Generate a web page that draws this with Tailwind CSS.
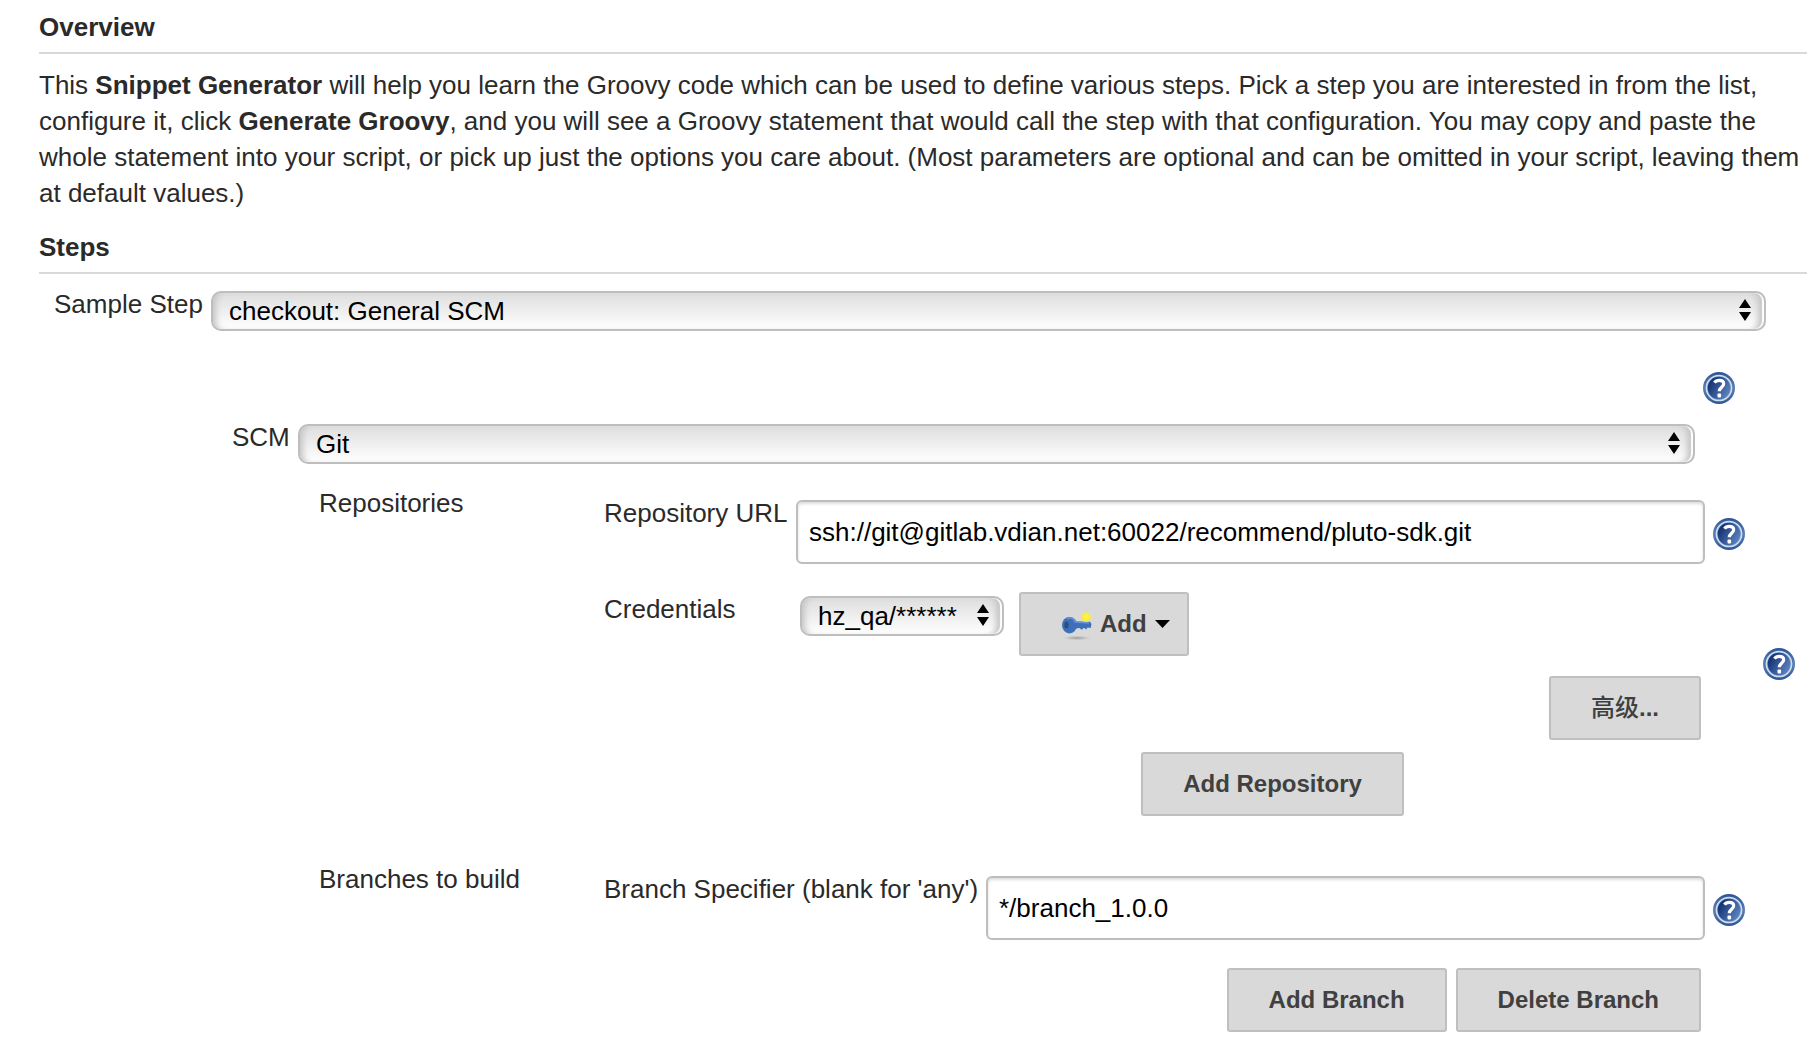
<!DOCTYPE html>
<html lang="en">
<head>
<meta charset="utf-8">
<title>Snippet Generator</title>
<script src="https://cdn.jsdelivr.net/npm/@tailwindcss/browser@4"></script>
</head>
<body class="bg-white font-['Liberation_Sans','Noto_Sans_CJK_SC',sans-serif] text-[26px] leading-9 text-[#2a2a2a]">
<svg class="absolute size-0" aria-hidden="true">
  <defs>
    <linearGradient id="disc" x1="0" y1="0.2" x2="1" y2="0.8">
      <stop offset="0.1" stop-color="#143374"/><stop offset="1" stop-color="#6189c4"/>
    </linearGradient>
    <linearGradient id="rim" x1="0" y1="0" x2="0" y2="1">
      <stop offset="0" stop-color="#2c5595"/><stop offset="0.5" stop-color="#5b80b8"/><stop offset="1" stop-color="#2c5595"/>
    </linearGradient>
  </defs>
  <symbol id="help" viewBox="0 0 32 32">
    <circle cx="16" cy="16" r="16" fill="url(#rim)"/>
    <circle cx="16" cy="16" r="12.600" fill="#7f9ecd" stroke="#d3deef" stroke-width="1.500"/>
    <circle cx="16" cy="16" r="11.3" fill="url(#disc)"/>
    <path d="M11.4 10.6c1.2-1.7 2.8-2.3 4.8-2.3 2.8 0 4.5 1.3 4.5 3.5 0 3.4-4.4 3.5-4.4 7.4" fill="none" stroke="#fff" stroke-width="3.2"/>
    <rect x="14.5" y="21.6" width="3.6" height="3.8" rx="0.8" fill="#fff"/>
  </symbol>
  <symbol id="updown" viewBox="0 0 12 22">
    <path d="M6 0l6 9H0zM6 22l6-9H0z" fill="#000"/>
  </symbol>
</svg>

<main class="pt-[9px] pr-[3px] pb-3 pl-[39px]">
  <h1 class="border-b-2 border-[#d9d9d9] pb-[7px] font-bold">Overview</h1>
  <p class="mt-[13px]">This <b>Snippet Generator</b> will help you learn the Groovy code which can be used to define various steps. Pick a step you are interested in from the list, configure it, click <b>Generate Groovy</b>, and you will see a Groovy statement that would call the step with that configuration. You may copy and paste the whole statement into your script, or pick up just the options you care about. (Most parameters are optional and can be omitted in your script, leaving them at default values.)</p>

  <h2 class="mt-[18px] border-b-2 border-[#d9d9d9] pb-[7px] font-bold">Steps</h2>

  <form>
    <div class="flex items-start pt-3 pr-[41px] pl-[15px]">
      <label for="step" class="w-[157px] shrink-0">Sample Step</label>
      <div class="relative mt-[5px] flex-1">
        <select id="step" class="block h-10 w-full appearance-none rounded-[10px] border-2 border-[#bebebe] bg-linear-to-b from-[#dedede] to-white pr-10 pb-1 pl-4 text-black shadow-[inset_-2px_0_1px_#fff,inset_7px_0_6px_-4px_#c4c4c4,inset_-10px_0_6px_-4px_#c4c4c4]"><option>checkout: General SCM</option></select>
        <svg class="pointer-events-none absolute top-2 right-[15px] h-[22px] w-3" aria-hidden="true"><use href="#updown"/></svg>
      </div>
    </div>

    <div class="mt-[41px] flex justify-end pr-[72px]">
      <a href="#" aria-label="Help for SCM"><svg class="size-8"><use href="#help"/></svg></a>
    </div>

    <div class="mt-[15px] flex items-start pr-28 pl-[193px]">
      <label for="scm" class="w-[66px] shrink-0">SCM</label>
      <div class="relative mt-[5px] flex-1">
        <select id="scm" class="block h-10 w-full appearance-none rounded-[10px] border-2 border-[#bebebe] bg-linear-to-b from-[#dedede] to-white pr-10 pb-1 pl-4 text-black shadow-[inset_-2px_0_1px_#fff,inset_7px_0_6px_-4px_#c4c4c4,inset_-10px_0_6px_-4px_#c4c4c4]"><option>Git</option></select>
        <svg class="pointer-events-none absolute top-2 right-[15px] h-[22px] w-3" aria-hidden="true"><use href="#updown"/></svg>
      </div>
    </div>

    <section class="mt-[21px] grid grid-cols-[285px_1fr_32px] pr-3 pl-[280px]">
      <h3>Repositories</h3>
      <div class="pt-[10px] pr-[18px] pb-[27px]">
        <div class="flex items-start">
          <label for="url" class="w-48 shrink-0">Repository URL</label>
          <input id="url" type="text" value="ssh://git@gitlab.vdian.net:60022/recommend/pluto-sdk.git" class="mt-[5px] h-16 min-w-0 flex-1 rounded-md border-2 border-[#bebebe] bg-white px-[11px] text-black shadow-[inset_0_2px_3px_#ddd]">
          <a href="#" class="mt-[23px] ml-2" aria-label="Help for Repository URL"><svg class="size-8"><use href="#help"/></svg></a>
        </div>
        <div class="mt-[27px] flex items-start">
          <label for="cred" class="w-[196px] shrink-0">Credentials</label>
          <div class="relative mt-[5px] w-[204px]">
            <select id="cred" class="block h-10 w-full appearance-none rounded-[10px] border-2 border-[#bebebe] bg-linear-to-b from-[#dedede] to-white pr-8 pb-1 pl-4 text-black shadow-[inset_-2px_0_1px_#fff,inset_7px_0_6px_-4px_#c4c4c4,inset_-10px_0_6px_-4px_#c4c4c4]"><option>hz_qa/******</option></select>
            <svg class="pointer-events-none absolute top-2 right-[15px] h-[22px] w-3" aria-hidden="true"><use href="#updown"/></svg>
          </div>
          <button type="button" class="mt-px ml-[15px] flex h-16 w-[170px] items-center rounded-[3px] border-2 border-[#bfbfbf] bg-[#d9d9d9] pl-10 text-2xl font-bold text-[#404040]">
            <svg class="size-8" viewBox="0 0 32 32" aria-hidden="true">
              <defs>
                <radialGradient id="shade"><stop offset="0" stop-color="#888" stop-opacity="0.8"/><stop offset="1" stop-color="#aaa" stop-opacity="0"/></radialGradient>
                <radialGradient id="spark"><stop offset="0.2" stop-color="#fff34a"/><stop offset="0.7" stop-color="#f6e947"/><stop offset="1" stop-color="#eee87c" stop-opacity="0"/></radialGradient>
              </defs>
              <ellipse cx="16" cy="30" rx="14" ry="2.4" fill="url(#shade)"/>
              <path d="M13 13.5l16 .3 1.5 2.2-.8 4-3-.6-1.6 2-2-1.7-2.4 2-2.2-1.6-5.5.6z" fill="#3d70b8"/>
              <ellipse cx="8.5" cy="17.2" rx="7.5" ry="8.3" fill="#3d70b8"/>
              <path d="M6 11q6-3 8 3l14 1" fill="none" stroke="#6793d1" stroke-width="1.5"/>
              <ellipse cx="5.5" cy="17" rx="2.2" ry="3.6" fill="#2e4f80"/>
              <circle cx="25" cy="9" r="5.8" fill="url(#spark)"/>
            </svg>
            <span class="ml-[7px]">Add</span>
            <svg class="ml-2 h-2 w-[15px]" viewBox="0 0 15 8" aria-hidden="true"><path d="M0 0h15L7.500 8z" fill="#000"/></svg>
          </button>
        </div>
        <div class="mt-5 flex justify-end pr-11">
          <button type="button" class="h-16 rounded-[3px] border-2 border-[#bfbfbf] bg-[#d9d9d9] px-10 text-2xl font-bold text-[#404040]"><span class="font-medium">高级</span>...</button>
        </div>
        <div class="mt-3 flex justify-center pl-[196px]">
          <button type="button" class="h-16 rounded-[3px] border-2 border-[#bfbfbf] bg-[#d9d9d9] px-10 text-2xl font-bold text-[#404040]">Add Repository</button>
        </div>
      </div>
      <a href="#" class="self-center" aria-label="Help for Repositories"><svg class="size-8"><use href="#help"/></svg></a>
    </section>

    <section class="mt-[18px] grid grid-cols-[285px_1fr_32px] pr-3 pl-[280px]">
      <h3>Branches to build</h3>
      <div class="pt-[10px] pr-[18px]">
        <div class="flex items-start">
          <label for="branch" class="w-[382px] shrink-0">Branch Specifier (blank for 'any')</label>
          <input id="branch" type="text" value="*/branch_1.0.0" class="mt-[5px] h-16 min-w-0 flex-1 rounded-md border-2 border-[#bebebe] bg-white px-[11px] text-black shadow-[inset_0_2px_3px_#ddd]">
          <a href="#" class="mt-[23px] ml-2" aria-label="Help for Branch Specifier"><svg class="size-8"><use href="#help"/></svg></a>
        </div>
        <div class="mt-7 flex justify-end gap-[9px] pr-11">
          <button type="button" class="h-16 rounded-[3px] border-2 border-[#bfbfbf] bg-[#d9d9d9] px-10 text-2xl font-bold text-[#404040]">Add Branch</button>
          <button type="button" class="h-16 rounded-[3px] border-2 border-[#bfbfbf] bg-[#d9d9d9] px-10 text-2xl font-bold text-[#404040]">Delete Branch</button>
        </div>
      </div>
    </section>
  </form>
</main>
</body>
</html>
